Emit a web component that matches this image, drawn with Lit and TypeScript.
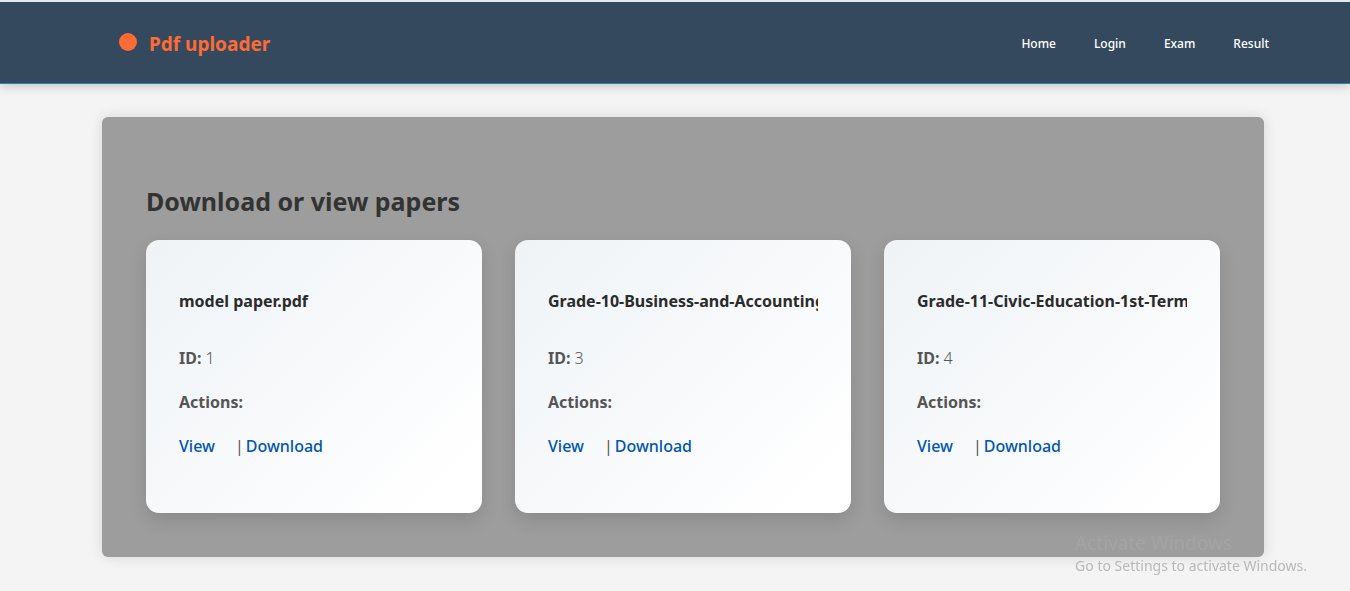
import { LitElement, html, css } from "lit";
import { customElement, property } from "lit/decorators.js";

interface Paper {
  id: number;
  name: string;
}

const PAPERS: Paper[] = [
  { id: 1, name: "model paper.pdf" },
  { id: 3, name: "Grade-10-Business-and-Accounting" },
  { id: 4, name: "Grade-11-Civic-Education-1st-Term" },
];

const NAV = ["Home", "Login", "Exam", "Result"];

@customElement("paper-card")
class PaperCard extends LitElement {
  @property({ attribute: false }) paper!: Paper;

  static styles = css`
    :host {
      display: block;
      min-width: 0;
    }
    .card {
      padding: 49px 33px 54px;
      border-radius: 13px;
      background: linear-gradient(135deg, #eff3f6, #f3f7fa 28%, #f7f8fa 42%, #fafbfd 65%, #fff 90%);
      box-shadow: 0 7px 18px rgba(0, 0, 0, 0.12);
      color: #555;
      font-size: 16px;
      line-height: 25px;
    }
    .name {
      margin: 0 0 33px;
      overflow: hidden;
      white-space: nowrap;
      color: #2b2b2b;
      font-size: 16px;
      line-height: 24px;
      font-weight: 700;
    }
    .row {
      margin: 0 0 19px;
    }
    .row:last-child {
      margin: 0;
    }
    .id {
      font-weight: 300;
    }
    .label {
      font-weight: 700;
    }
    .links {
      display: flex;
      align-items: baseline;
    }
    .link {
      color: #0056b3;
      font-weight: 500;
      font-size: 16px;
      text-decoration: none;
    }
    .bar {
      margin: 0 2px 0 20px;
      font-weight: 400;
    }
  `;

  render() {
    return html`<article class="card">
      <h3 class="name">${this.paper.name}</h3>
      <p class="row id"><strong class="label">ID:</strong> ${this.paper.id}</p>
      <p class="row"><strong class="label">Actions:</strong></p>
      <p class="row links">
        <a class="link" href="#view">View</a><span class="bar">|</span
        ><a class="link" href="#download">Download</a>
      </p>
    </article>`;
  }
}

@customElement("app-root")
class AppRoot extends LitElement {
  static styles = css`
    :host {
      display: block;
      box-sizing: border-box;
      min-height: 100vh;
      background: #f4f4f4;
      font-family: "Noto Sans", "Open Sans", sans-serif;
    }
    .header {
      display: flex;
      align-items: center;
      justify-content: space-between;
      padding: 29px 81px 26px 119px;
      border-top: 2px solid #e3eaf0;
      border-bottom: 1px solid #2980b9;
      background: #34495e;
      box-shadow: 0 2px 10px rgba(0, 0, 0, 0.2);
    }
    .brand {
      display: flex;
      align-items: center;
      gap: 12px;
      color: #ff6b35;
      font-size: 19px;
      line-height: 26px;
      font-weight: 700;
      text-decoration: none;
    }
    .dot {
      width: 18px;
      height: 18px;
      margin-bottom: 5px;
      border-radius: 50%;
      background: #ff6b35;
    }
    .nav {
      display: flex;
      gap: 38px;
    }
    .item {
      color: #fff;
      font-size: 12px;
      line-height: 20px;
      font-weight: 500;
      text-decoration: none;
    }
    .panel {
      margin: 33px 86px 0 102px;
      padding: 65px 44px 44px;
      border-radius: 6px;
      background: #9d9d9d;
      box-shadow: 0 0 14px rgba(0, 0, 0, 0.12);
    }
    .title {
      margin: 0 0 20px;
      color: #333;
      font-size: 25px;
      line-height: 38px;
      font-weight: 700;
    }
    .grid {
      display: grid;
      grid-template-columns: repeat(3, minmax(0, 1fr));
      gap: 33px;
    }
    .notice {
      position: fixed;
      right: 43px;
      bottom: 15px;
      color: rgba(165, 165, 165, 0.75);
      font-size: 14px;
      line-height: 20px;
      pointer-events: none;
    }
    .notice-title {
      font-size: 19px;
      line-height: 26px;
    }
  `;

  render() {
    return html`
      <header class="header">
        <a class="brand" href="#home"><span class="dot"></span>Pdf uploader</a>
        <nav class="nav">
          ${NAV.map((n) => html`<a class="item" href="#${n.toLowerCase()}">${n}</a>`)}
        </nav>
      </header>
      <main class="panel">
        <h2 class="title">Download or view papers</h2>
        <div class="grid">
          ${PAPERS.map((p) => html`<paper-card .paper=${p}></paper-card>`)}
        </div>
      </main>
      <div class="notice">
        <div class="notice-title">Activate Windows</div>
        <div>Go to Settings to activate Windows.</div>
      </div>
    `;
  }
}
